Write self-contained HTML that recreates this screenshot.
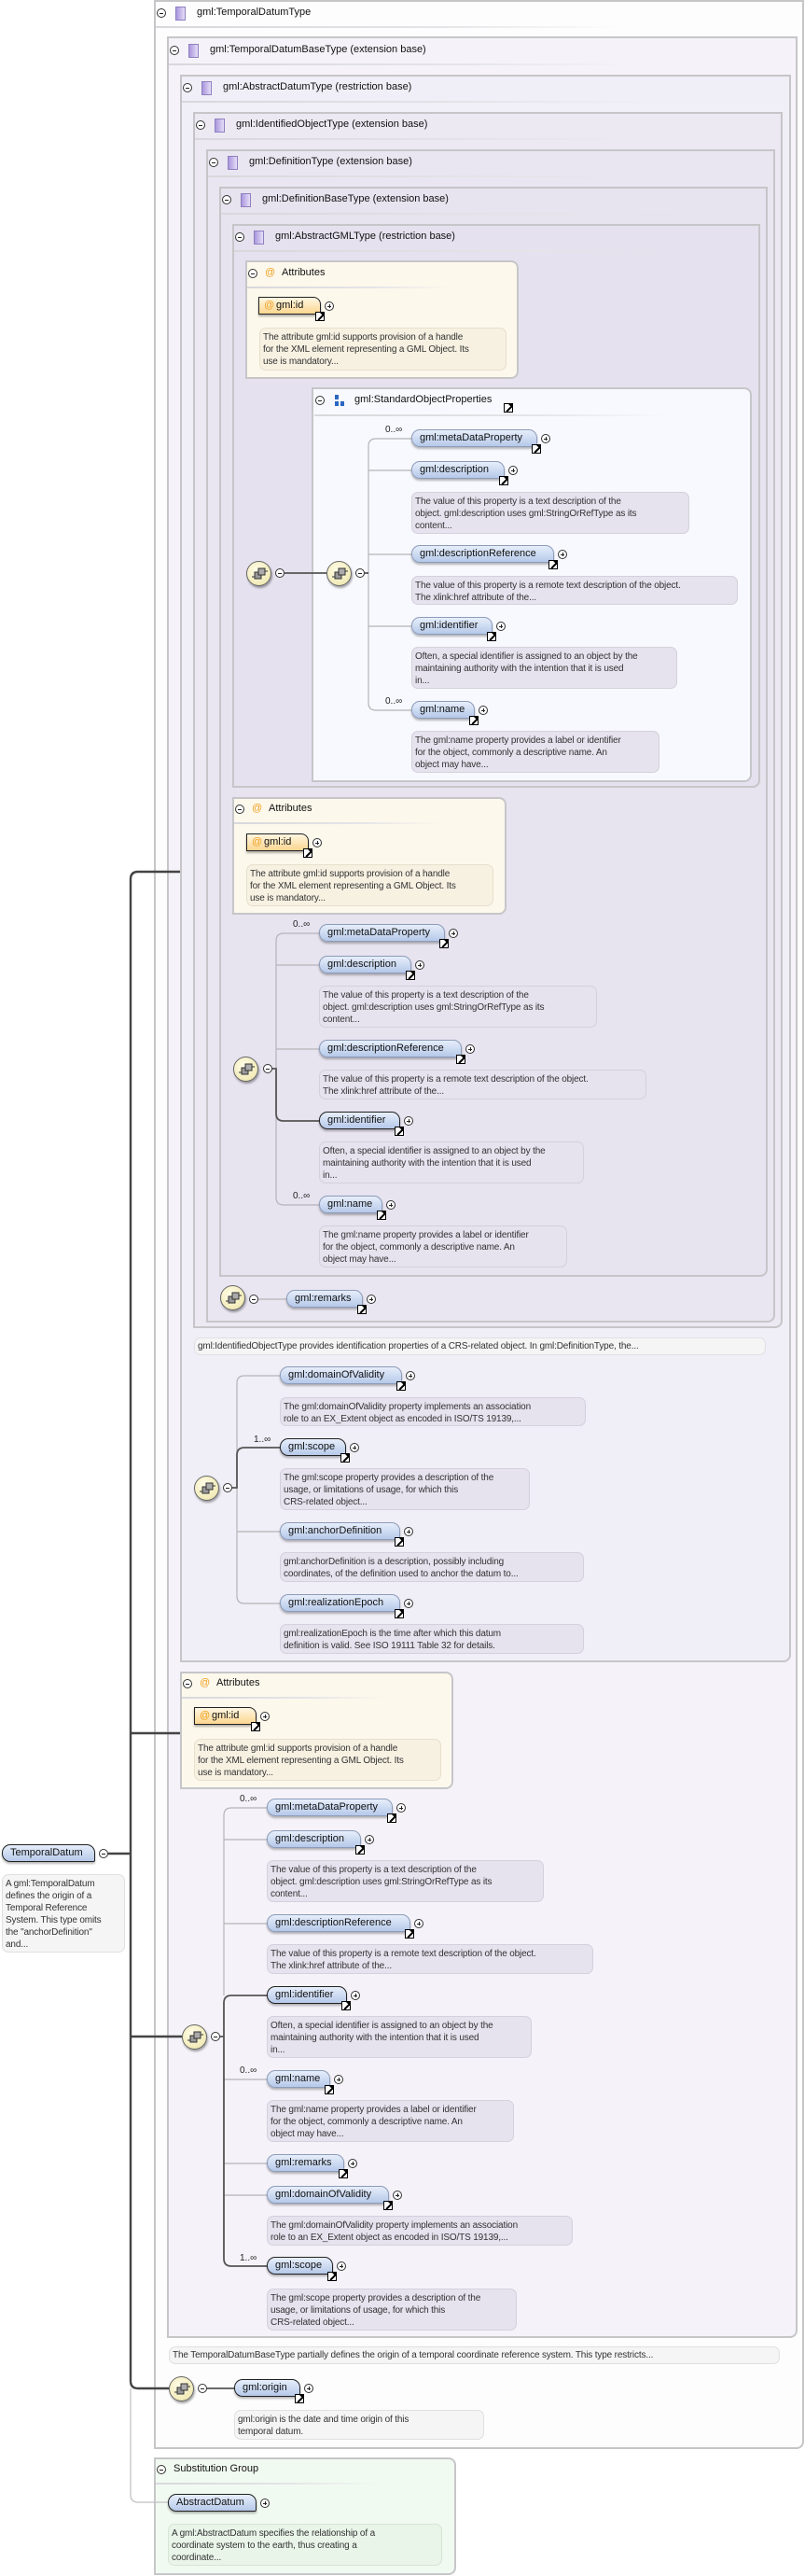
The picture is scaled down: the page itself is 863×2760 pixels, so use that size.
<!DOCTYPE html>
<html><head><meta charset="utf-8">
<style>
*{margin:0;padding:0}
body{width:863px;height:2760px;position:relative;background:#fff;font-family:"Liberation Sans",sans-serif;color:#111;overflow:hidden}
.bx{position:absolute;border:2px solid #c6c6c9;border-radius:0 0 8px 0;box-sizing:border-box}
.ti{position:absolute;height:30px;width:520px}
.ti .m,.mn{position:absolute;width:10px;height:10px;border:1px solid #333;border-radius:50%;background:#fff;box-sizing:border-box}
.ti .m{left:3px;top:9px}
.m::after,.mn::after{content:"";position:absolute;left:2px;top:3.5px;width:4px;height:1px;background:#222}
.ti .ic{position:absolute;left:23px;top:7px;width:11px;height:15px;box-sizing:border-box;background:linear-gradient(90deg,#a996dc,#e6def8);border:1px solid #8f80c0}
.ti .t{position:absolute;left:46px;top:7px;font-size:11px;white-space:nowrap;color:#111}
.ti .sep{position:absolute;left:2px;top:28px;width:500px;height:2px;background:linear-gradient(90deg,#d8d8dc,#e4e4e8 60%,rgba(230,230,230,0))}
.ab{position:absolute;background:#fdf8ec;border:2px solid #c6c6c9;border-radius:0 8px 8px 0;box-sizing:border-box}
.at{position:absolute;height:19px;border:1px solid #222;border-radius:0 8px 0 0;background:linear-gradient(#fff6e2,#fbd690);box-shadow:0 2px 2px rgba(0,0,0,.3);font-size:11px;line-height:17px;box-sizing:border-box;padding-left:18px;white-space:nowrap}
.at::before{content:"@";position:absolute;left:5px;color:#f0a020}
.el{position:absolute;height:19px;box-sizing:border-box;border:1px solid #8d9cba;border-radius:9px 9px 2px 9px;background:linear-gradient(#e6eefb,#b6c9ea);font-size:11px;line-height:17px;padding-left:8px;box-shadow:0 2px 2px rgba(0,0,0,.28);white-space:nowrap;color:#111}
.el.b{border:1.5px solid #222}
.lk{position:absolute;right:-5px;bottom:-8px;width:10px;height:10px;box-sizing:border-box;border:1px solid #000;background:#fff}
.lk::before{content:"";position:absolute;left:3.5px;top:1px;width:1.5px;height:8px;background:#000;transform:rotate(45deg)}
.lk::after{content:"";position:absolute;right:0;top:0;border-top:4px solid #000;border-left:4px solid transparent}
.pc{position:absolute;right:-15px;top:4px;width:10px;height:10px;border:1px solid #333;border-radius:50%;background:#fff;box-sizing:border-box}
.pc::before{content:"";position:absolute;left:2px;top:3.5px;width:4px;height:1px;background:#222}
.pc::after{content:"";position:absolute;left:3.5px;top:2px;width:1px;height:4px;background:#222}
.tip{position:absolute;background:#e6e2ee;border:1px solid #d4d0dc;border-radius:7px;font-size:10px;line-height:13px;color:#333;padding:3px 3px;box-sizing:border-box;white-space:nowrap;letter-spacing:-.15px}
.tip.w{background:#f5f5f6;border-color:#e0e0e4}
.tip.y{background:#f7f1e2;border-color:#e6dfcc}
.tip.g{background:#eaf5ea;border-color:#d6e4d6}
.card{position:absolute;font-size:10px;color:#222}
.sq{position:absolute;width:27px;height:27px;border-radius:50%;border:1px solid #666;box-sizing:border-box;background:radial-gradient(circle at 40% 35%,#fffde6,#ece3a6);box-shadow:1px 2px 2px rgba(0,0,0,.35)}
.sq svg{position:absolute;left:4px;top:4px}
</style></head><body>

<div class="bx" style="left:165px;top:0;width:697px;height:2624px;background:#fdfdfe"></div>
<div class="bx" style="left:179px;top:39px;width:676px;height:2466px;background:#f5f3f9"></div>
<div class="bx" style="left:193px;top:80px;width:655px;height:1701px;background:#f0eef6"></div>
<div class="bx" style="left:207px;top:120px;width:632px;height:1303px;background:#ece9f3"></div>
<div class="bx" style="left:221px;top:160px;width:610px;height:1257px;background:#e9e6f1"></div>
<div class="bx" style="left:235px;top:200px;width:588px;height:1168px;background:#e7e3ef"></div>
<div class="bx" style="left:249px;top:240px;width:566px;height:604px;background:#e5e1ee"></div>
<div class="bx" style="left:334px;top:415px;width:472px;height:423px;background:#f8f9fe;border-radius:0 8px 8px 0"></div>

<div class="ti" style="left:165px;top:0"><i class="m"></i><i class="ic"></i><span class="t">gml:TemporalDatumType</span><i class="sep"></i></div>
<div class="ti" style="left:179px;top:40px"><i class="m"></i><i class="ic"></i><span class="t">gml:TemporalDatumBaseType (extension base)</span><i class="sep"></i></div>
<div class="ti" style="left:193px;top:80px"><i class="m"></i><i class="ic"></i><span class="t">gml:AbstractDatumType (restriction base)</span><i class="sep"></i></div>
<div class="ti" style="left:207px;top:120px"><i class="m"></i><i class="ic"></i><span class="t">gml:IdentifiedObjectType (extension base)</span><i class="sep"></i></div>
<div class="ti" style="left:221px;top:160px"><i class="m"></i><i class="ic"></i><span class="t">gml:DefinitionType (extension base)</span><i class="sep"></i></div>
<div class="ti" style="left:235px;top:200px"><i class="m"></i><i class="ic"></i><span class="t">gml:DefinitionBaseType (extension base)</span><i class="sep"></i></div>
<div class="ti" style="left:249px;top:240px"><i class="m"></i><i class="ic"></i><span class="t">gml:AbstractGMLType (restriction base)</span><i class="sep"></i></div>

<div class="ti" style="left:335px;top:415px;width:460px"><i class="m"></i>
<svg style="position:absolute;left:24px;top:8px" width="12" height="13"><rect x="0" y="0" width="4" height="5" fill="#2a66c0"/><rect x="0" y="7" width="4" height="5" fill="#2a66c0"/><rect x="6" y="7" width="4" height="5" fill="#2a66c0"/></svg>
<span class="t" style="left:45px">gml:StandardObjectProperties</span><i class="sep" style="width:380px;top:29px"></i></div>
<i class="lk" style="position:absolute;left:540px;top:432px;right:auto;bottom:auto"></i>

<div class="ab" style="left:263px;top:279px;width:293px;height:127px"></div>
<div class="ti" style="left:263px;top:279px;width:290px"><i class="m" style="left:3px"></i><span class="t" style="left:21px;color:#f0a020">@</span><span class="t" style="left:39px">Attributes</span><i class="sep" style="width:220px"></i></div>
<div class="at" style="left:277px;top:318px;width:67px">gml:id<i class="lk"></i><i class="pc"></i></div>
<div class="tip y" style="left:278px;top:351px;width:265px;height:46px">The attribute gml:id supports provision of a handle<br>for the XML element representing a GML Object. Its<br>use is mandatory...</div>

<div class="ab" style="left:249px;top:854px;width:294px;height:126px"></div>
<div class="ti" style="left:249px;top:853px;width:290px"><i class="m"></i><span class="t" style="left:21px;color:#f0a020">@</span><span class="t" style="left:39px">Attributes</span><i class="sep" style="width:220px"></i></div>
<div class="at" style="left:264px;top:893px;width:67px">gml:id<i class="lk"></i><i class="pc"></i></div>
<div class="tip y" style="left:264px;top:926px;width:265px;height:45px">The attribute gml:id supports provision of a handle<br>for the XML element representing a GML Object. Its<br>use is mandatory...</div>

<div class="ab" style="left:193px;top:1791px;width:293px;height:126px"></div>
<div class="ti" style="left:193px;top:1790px;width:290px"><i class="m"></i><span class="t" style="left:21px;color:#f0a020">@</span><span class="t" style="left:39px">Attributes</span><i class="sep" style="width:220px"></i></div>
<div class="at" style="left:208px;top:1829px;width:67px">gml:id<i class="lk"></i><i class="pc"></i></div>
<div class="tip y" style="left:208px;top:1863px;width:265px;height:45px">The attribute gml:id supports provision of a handle<br>for the XML element representing a GML Object. Its<br>use is mandatory...</div>

<div class="ab" style="left:165px;top:2633px;width:324px;height:126px;background:#f1faf1"></div>
<div class="ti" style="left:165px;top:2632px;width:300px"><i class="m"></i><span class="t" style="left:21px">Substitution Group</span><i class="sep" style="width:240px"></i></div>

<svg style="position:absolute;left:0;top:0" width="863" height="2760" fill="none">
<g stroke="#b4b4b8" stroke-width="1.2">
<path d="M441 470 H403 Q395 470 395 478 V753 Q395 761 403 761 H441 M395 504 H441 M395 594 H441 M395 671 H441"/>
<path d="M342 1000 H304 Q296 1000 296 1008 V1283 Q296 1291 304 1291 H342 M296 1034 H342 M296 1124 H342"/>
<path d="M300 1474 H262 Q254 1474 254 1482 V1710 Q254 1718 262 1718 H300 M254 1641 H300"/>
<path d="M286 1937 H248 Q240 1937 240 1945 V2138 M240 1971 H286 M240 2061 H286 M240 2228 H286 M240 2318 H286 M240 2352 H286"/>
<path d="M277 1392 H307"/>
<path d="M140 2559 V2673 Q140 2681 148 2681 H180" stroke="#c0c0c4"/>
</g>
<g stroke="#555" stroke-width="1.8">
<path d="M305 614 H350"/>
<path d="M391 614 H395"/>
<path d="M292 1145 H296 V1193 Q296 1201 304 1201 H342"/>
<path d="M249 1594 H254 V1559 Q254 1551 262 1551 H300"/>
<path d="M236 2182 H240 V2146 Q240 2138 248 2138 H286 M240 2182 V2420 Q240 2428 248 2428 H286"/>
<path d="M222 2559 H251"/>
</g>
<g stroke="#444" stroke-width="2.4">
<path d="M116 1986 H140"/>
<path d="M193 934 H148 Q140 934 140 942 V2551 Q140 2559 148 2559 H181"/>
<path d="M140 1857 H193 M140 2182 H195"/>
</g>
</svg>

<div class="sq" style="left:264px;top:601px"><svg width="19" height="19" viewBox="0 0 19 19"><rect x="4" y="7" width="7" height="7" fill="#999" stroke="#333"/><rect x="8" y="3" width="7" height="7" fill="#aaa" stroke="#333"/><path d="M1 12 H4 M15 6 H18" stroke="#333"/></svg></div><i class="mn" style="left:295px;top:609px"></i>
<div class="sq" style="left:350px;top:601px"><svg width="19" height="19" viewBox="0 0 19 19"><rect x="4" y="7" width="7" height="7" fill="#999" stroke="#333"/><rect x="8" y="3" width="7" height="7" fill="#aaa" stroke="#333"/><path d="M1 12 H4 M15 6 H18" stroke="#333"/></svg></div><i class="mn" style="left:381px;top:609px"></i>
<div class="sq" style="left:250px;top:1132px"><svg width="19" height="19" viewBox="0 0 19 19"><rect x="4" y="7" width="7" height="7" fill="#999" stroke="#333"/><rect x="8" y="3" width="7" height="7" fill="#aaa" stroke="#333"/><path d="M1 12 H4 M15 6 H18" stroke="#333"/></svg></div><i class="mn" style="left:282px;top:1140px"></i>
<div class="sq" style="left:236px;top:1377px"><svg width="19" height="19" viewBox="0 0 19 19"><rect x="4" y="7" width="7" height="7" fill="#999" stroke="#333"/><rect x="8" y="3" width="7" height="7" fill="#aaa" stroke="#333"/><path d="M1 12 H4 M15 6 H18" stroke="#333"/></svg></div><i class="mn" style="left:267px;top:1387px"></i>
<div class="sq" style="left:208px;top:1581px"><svg width="19" height="19" viewBox="0 0 19 19"><rect x="4" y="7" width="7" height="7" fill="#999" stroke="#333"/><rect x="8" y="3" width="7" height="7" fill="#aaa" stroke="#333"/><path d="M1 12 H4 M15 6 H18" stroke="#333"/></svg></div><i class="mn" style="left:239px;top:1589px"></i>
<div class="sq" style="left:195px;top:2169px"><svg width="19" height="19" viewBox="0 0 19 19"><rect x="4" y="7" width="7" height="7" fill="#999" stroke="#333"/><rect x="8" y="3" width="7" height="7" fill="#aaa" stroke="#333"/><path d="M1 12 H4 M15 6 H18" stroke="#333"/></svg></div><i class="mn" style="left:226px;top:2177px"></i>
<div class="sq" style="left:181px;top:2546px"><svg width="19" height="19" viewBox="0 0 19 19"><rect x="4" y="7" width="7" height="7" fill="#999" stroke="#333"/><rect x="8" y="3" width="7" height="7" fill="#aaa" stroke="#333"/><path d="M1 12 H4 M15 6 H18" stroke="#333"/></svg></div><i class="mn" style="left:212px;top:2554px"></i>

<span class="card" style="left:413px;top:455px">0..∞</span>
<div class="el" style="left:441px;top:460px;width:135px">gml:metaDataProperty<i class="lk"></i><i class="pc"></i></div>
<div class="el" style="left:441px;top:494px;width:100px">gml:description<i class="lk"></i><i class="pc"></i></div>
<div class="tip" style="left:441px;top:527px;width:298px;height:45px">The value of this property is a text description of the<br>object. gml:description uses gml:StringOrRefType as its<br>content...</div>
<div class="el" style="left:441px;top:584px;width:153px">gml:descriptionReference<i class="lk"></i><i class="pc"></i></div>
<div class="tip" style="left:441px;top:617px;width:350px;height:31px">The value of this property is a remote text description of the object.<br>The xlink:href attribute of the...</div>
<div class="el" style="left:441px;top:661px;width:87px">gml:identifier<i class="lk"></i><i class="pc"></i></div>
<div class="tip" style="left:441px;top:693px;width:285px;height:45px">Often, a special identifier is assigned to an object by the<br>maintaining authority with the intention that it is used<br>in...</div>
<span class="card" style="left:413px;top:746px">0..∞</span>
<div class="el" style="left:441px;top:751px;width:68px">gml:name<i class="lk"></i><i class="pc"></i></div>
<div class="tip" style="left:441px;top:783px;width:266px;height:45px">The gml:name property provides a label or identifier<br>for the object, commonly a descriptive name. An<br>object may have...</div>

<span class="card" style="left:314px;top:985px">0..∞</span>
<div class="el" style="left:342px;top:990px;width:135px">gml:metaDataProperty<i class="lk"></i><i class="pc"></i></div>
<div class="el" style="left:342px;top:1024px;width:99px">gml:description<i class="lk"></i><i class="pc"></i></div>
<div class="tip" style="left:342px;top:1056px;width:298px;height:45px">The value of this property is a text description of the<br>object. gml:description uses gml:StringOrRefType as its<br>content...</div>
<div class="el" style="left:342px;top:1114px;width:153px">gml:descriptionReference<i class="lk"></i><i class="pc"></i></div>
<div class="tip" style="left:342px;top:1146px;width:351px;height:32px">The value of this property is a remote text description of the object.<br>The xlink:href attribute of the...</div>
<div class="el b" style="left:342px;top:1191px;width:87px">gml:identifier<i class="lk"></i><i class="pc"></i></div>
<div class="tip" style="left:342px;top:1223px;width:284px;height:45px">Often, a special identifier is assigned to an object by the<br>maintaining authority with the intention that it is used<br>in...</div>
<span class="card" style="left:314px;top:1276px">0..∞</span>
<div class="el" style="left:342px;top:1281px;width:68px">gml:name<i class="lk"></i><i class="pc"></i></div>
<div class="tip" style="left:342px;top:1313px;width:266px;height:45px">The gml:name property provides a label or identifier<br>for the object, commonly a descriptive name. An<br>object may have...</div>
<div class="el" style="left:307px;top:1382px;width:82px">gml:remarks<i class="lk"></i><i class="pc"></i></div>

<div class="tip w" style="left:208px;top:1433px;width:613px;height:19px;padding-top:2px">gml:IdentifiedObjectType provides identification properties of a CRS-related object. In gml:DefinitionType, the...</div>

<div class="el" style="left:300px;top:1464px;width:131px">gml:domainOfValidity<i class="lk"></i><i class="pc"></i></div>
<div class="tip" style="left:300px;top:1497px;width:328px;height:31px">The gml:domainOfValidity property implements an association<br>role to an EX_Extent object as encoded in ISO/TS 19139,...</div>
<span class="card" style="left:272px;top:1537px">1..∞</span>
<div class="el b" style="left:300px;top:1541px;width:71px">gml:scope<i class="lk"></i><i class="pc"></i></div>
<div class="tip" style="left:300px;top:1573px;width:268px;height:45px">The gml:scope property provides a description of the<br>usage, or limitations of usage, for which this<br>CRS-related object...</div>
<div class="el" style="left:300px;top:1631px;width:129px">gml:anchorDefinition<i class="lk"></i><i class="pc"></i></div>
<div class="tip" style="left:300px;top:1663px;width:326px;height:32px">gml:anchorDefinition is a description, possibly including<br>coordinates, of the definition used to anchor the datum to...</div>
<div class="el" style="left:300px;top:1708px;width:129px">gml:realizationEpoch<i class="lk"></i><i class="pc"></i></div>
<div class="tip" style="left:300px;top:1740px;width:326px;height:32px">gml:realizationEpoch is the time after which this datum<br>definition is valid. See ISO 19111 Table 32 for details.</div>

<span class="card" style="left:257px;top:1922px">0..∞</span>
<div class="el" style="left:286px;top:1927px;width:135px">gml:metaDataProperty<i class="lk"></i><i class="pc"></i></div>
<div class="el" style="left:286px;top:1961px;width:101px">gml:description<i class="lk"></i><i class="pc"></i></div>
<div class="tip" style="left:286px;top:1993px;width:297px;height:45px">The value of this property is a text description of the<br>object. gml:description uses gml:StringOrRefType as its<br>content...</div>
<div class="el" style="left:286px;top:2051px;width:154px">gml:descriptionReference<i class="lk"></i><i class="pc"></i></div>
<div class="tip" style="left:286px;top:2083px;width:350px;height:32px">The value of this property is a remote text description of the object.<br>The xlink:href attribute of the...</div>
<div class="el b" style="left:286px;top:2128px;width:86px">gml:identifier<i class="lk"></i><i class="pc"></i></div>
<div class="tip" style="left:286px;top:2160px;width:284px;height:45px">Often, a special identifier is assigned to an object by the<br>maintaining authority with the intention that it is used<br>in...</div>
<span class="card" style="left:257px;top:2213px">0..∞</span>
<div class="el" style="left:286px;top:2218px;width:68px">gml:name<i class="lk"></i><i class="pc"></i></div>
<div class="tip" style="left:286px;top:2250px;width:265px;height:45px">The gml:name property provides a label or identifier<br>for the object, commonly a descriptive name. An<br>object may have...</div>
<div class="el" style="left:286px;top:2308px;width:83px">gml:remarks<i class="lk"></i><i class="pc"></i></div>
<div class="el" style="left:286px;top:2342px;width:131px">gml:domainOfValidity<i class="lk"></i><i class="pc"></i></div>
<div class="tip" style="left:286px;top:2374px;width:328px;height:32px">The gml:domainOfValidity property implements an association<br>role to an EX_Extent object as encoded in ISO/TS 19139,...</div>
<span class="card" style="left:257px;top:2414px">1..∞</span>
<div class="el b" style="left:286px;top:2418px;width:71px">gml:scope<i class="lk"></i><i class="pc"></i></div>
<div class="tip" style="left:286px;top:2452px;width:268px;height:45px">The gml:scope property provides a description of the<br>usage, or limitations of usage, for which this<br>CRS-related object...</div>

<div class="tip w" style="left:181px;top:2514px;width:655px;height:19px;padding-top:2px">The TemporalDatumBaseType partially defines the origin of a temporal coordinate reference system. This type restricts...</div>

<div class="el b" style="left:251px;top:2549px;width:71px">gml:origin<i class="lk"></i><i class="pc"></i></div>
<div class="tip w" style="left:251px;top:2582px;width:268px;height:32px">gml:origin is the date and time origin of this<br>temporal datum.</div>

<div class="el b" style="left:180px;top:2672px;width:95px">AbstractDatum<i class="pc"></i></div>
<div class="tip g" style="left:180px;top:2704px;width:294px;height:45px">A gml:AbstractDatum specifies the relationship of a<br>coordinate system to the earth, thus creating a<br>coordinate...</div>

<div class="el b" style="left:2px;top:1976px;width:100px">TemporalDatum</div>
<i class="mn" style="left:106px;top:1981px"></i>
<div class="tip w" style="left:2px;top:2008px;width:132px;height:84px">A gml:TemporalDatum<br>defines the origin of a<br>Temporal Reference<br>System. This type omits<br>the "anchorDefinition"<br>and...</div>

</body></html>
